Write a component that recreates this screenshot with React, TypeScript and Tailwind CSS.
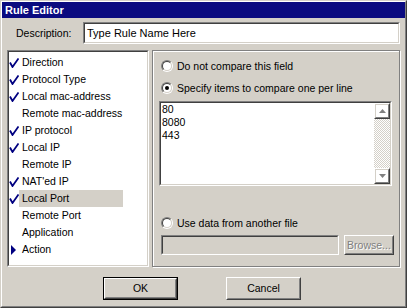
import { ReactNode } from 'react'

const FONT = "font-['Liberation_Sans',Arial,sans-serif] text-[10.5px] leading-none text-black"

const FIELDS = [
  { label: 'Direction', mark: 'check' },
  { label: 'Protocol Type', mark: 'check' },
  { label: 'Local mac-address', mark: 'check' },
  { label: 'Remote mac-address', mark: '' },
  { label: 'IP protocol', mark: 'check' },
  { label: 'Local IP', mark: 'check' },
  { label: 'Remote IP', mark: '' },
  { label: "NAT'ed IP", mark: 'check' },
  { label: 'Local Port', mark: 'check', selected: true },
  { label: 'Remote Port', mark: '' },
  { label: 'Application', mark: '' },
  { label: 'Action', mark: 'arrow' },
]

function Sunken({ className = '', inner = '', children }: { className?: string; inner?: string; children?: ReactNode }) {
  return (
    <div className={`border border-t-[#808080] border-l-[#808080] border-r-white border-b-white ${className}`}>
      <div className={`h-full w-full border border-t-[#404040] border-l-[#404040] border-r-[#d4d0c8] border-b-[#d4d0c8] ${inner}`}>
        {children}
      </div>
    </div>
  )
}

function Raised({ className = '', children }: { className?: string; children?: ReactNode }) {
  return (
    <div className={`border border-t-white border-l-white border-r-[#404040] border-b-[#404040] ${className}`}>
      <div className="flex h-full w-full items-center justify-center border border-t-[#d4d0c8] border-l-[#d4d0c8] border-r-[#808080] border-b-[#808080]">
        {children}
      </div>
    </div>
  )
}

function Radio({ checked, label }: { checked?: boolean; label: string }) {
  return (
    <div className="flex h-[16px] items-center">
      <div className="h-[12px] w-[12px] rounded-full border border-t-[#808080] border-l-[#808080] border-r-white border-b-white">
        <div className="flex h-full w-full items-center justify-center rounded-full border border-t-[#404040] border-l-[#404040] border-r-[#d4d0c8] border-b-[#d4d0c8] bg-white">
          {checked && <div className="h-[4px] w-[4px] rounded-full bg-black" />}
        </div>
      </div>
      <span className="ml-[4px] whitespace-nowrap">{label}</span>
    </div>
  )
}

function ScrollArrow({ up }: { up?: boolean }) {
  return (
    <svg width="7" height="4" viewBox="0 0 7 4">
      <path d={up ? 'M0 4 L3.5 0 L7 4 Z' : 'M0 0 L7 0 L3.5 4 Z'} fill="#808080" />
    </svg>
  )
}

export default function App() {
  return (
    <div className={`h-[308px] w-[407px] bg-[#d4d0c8] ${FONT}`}>
      <div className="h-full w-full border border-t-[#d4d0c8] border-l-[#d4d0c8] border-r-[#404040] border-b-[#404040]">
        <div className="flex h-full w-full flex-col border border-t-white border-l-white border-r-[#808080] border-b-[#808080]">
          <div className="flex h-[16px] items-center bg-[#0a0a80] pl-[3px] text-[11px] font-bold text-white">
            Rule Editor
          </div>

          <div className="mt-[4px] flex h-[22px] items-center pl-[14px] pr-[5px]">
            <span className="w-[67px]">Description:</span>
            <Sunken className="h-[22px] w-[317px]" inner="flex items-center bg-white pl-[2px]">
              <span className="text-[11px]">Type Rule Name Here</span>
            </Sunken>
          </div>

          <div className="mt-[6px] flex pl-[5px]">
            <Sunken className="h-[217px] w-[142px]" inner="bg-white pt-[2px]">
              {FIELDS.map((f) => (
                <div key={f.label} className="flex h-[17px] items-center">
                  <div className="flex w-[10px] items-center justify-end">
                    {f.mark === 'check' && (
                      <svg width="10" height="10" viewBox="0 0 10 10">
                        <path d="M1 4.5 L3.5 9 L9.5 0.5" fill="none" stroke="#000080" strokeWidth="1.8" />
                      </svg>
                    )}
                    {f.mark === 'arrow' && (
                      <svg width="8" height="10" viewBox="0 0 8 10" className="mr-[1px]">
                        <path d="M1 0 L6 5 L1 10 Z" fill="#000080" />
                      </svg>
                    )}
                  </div>
                  <div
                    className={`flex h-[17px] w-[104px] items-center whitespace-nowrap pl-[3px] ${
                      f.selected ? 'bg-[#d4d0c8]' : ''
                    }`}
                  >
                    {f.label}
                  </div>
                </div>
              ))}
            </Sunken>

            <div className="ml-[3px] h-[217px] w-[248px] border border-[#808080] shadow-[1px_1px_0_#fff]">
              <div className="flex h-full w-full flex-col border-t border-l border-t-white border-l-white pl-[7px] pt-[6px]">
                <Radio label="Do not compare this field" />
                <div className="mt-[6px]">
                  <Radio checked label="Specify items to compare one per line" />
                </div>
                <Sunken className="ml-[-2px] mt-[5px] h-[85px] w-[233px]" inner="flex bg-white">
                  <div className="flex-1 pl-[1px] leading-[13px]">
                    <div>80</div>
                    <div>8080</div>
                    <div>443</div>
                  </div>
                  <div className="flex w-[16px] flex-col">
                    <Raised className="h-[16px] w-[16px]">
                      <ScrollArrow up />
                    </Raised>
                    <div className="flex-1 bg-[repeating-conic-gradient(#d4d0c8_0_25%,#fff_0_50%)] bg-[length:2px_2px]" />
                    <Raised className="h-[16px] w-[16px]">
                      <ScrollArrow />
                    </Raised>
                  </div>
                </Sunken>
                <div className="mt-[29px]">
                  <Radio label="Use data from another file" />
                </div>
                <div className="mt-[4px] flex h-[20px] items-center">
                  <Sunken className="h-[20px] w-[178px]" inner="bg-[#d4d0c8]" />
                  <Raised className="ml-[5px] h-[20px] w-[50px]">
                    <span className="text-[#808080] [text-shadow:1px_1px_0_#fff]">Browse...</span>
                  </Raised>
                </div>
              </div>
            </div>
          </div>

          <div className="mt-[10px] flex">
            <div className="ml-[101px] h-[23px] w-[75px] border border-black">
              <Raised className="h-full w-full">OK</Raised>
            </div>
            <Raised className="ml-[48px] h-[23px] w-[75px]">Cancel</Raised>
          </div>
        </div>
      </div>
    </div>
  )
}
